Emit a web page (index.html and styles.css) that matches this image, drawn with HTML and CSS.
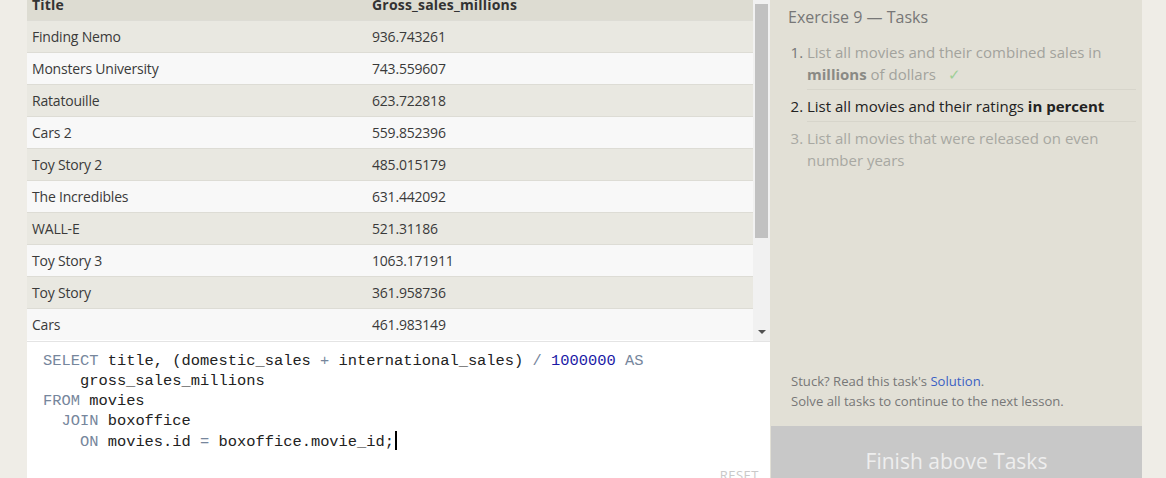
FILE: index.html
```html
<!DOCTYPE html>
<html>
<head>
<meta charset="utf-8">
<link rel="stylesheet" href="styles.css">
</head>
<body>
<div class="page">
  <div class="gutter"></div>
  <main class="left">
    <div class="results">
      <div class="table-scroll">
        <table class="grid">
          <thead>
            <tr><th class="c1">Title</th><th>Gross_sales_millions</th></tr>
          </thead>
          <tbody>
            <tr><td class="c1">Finding Nemo</td><td>936.743261</td></tr>
            <tr><td class="c1">Monsters University</td><td>743.559607</td></tr>
            <tr><td class="c1">Ratatouille</td><td>623.722818</td></tr>
            <tr><td class="c1">Cars 2</td><td>559.852396</td></tr>
            <tr><td class="c1">Toy Story 2</td><td>485.015179</td></tr>
            <tr><td class="c1">The Incredibles</td><td>631.442092</td></tr>
            <tr><td class="c1">WALL-E</td><td>521.31186</td></tr>
            <tr><td class="c1">Toy Story 3</td><td>1063.171911</td></tr>
            <tr><td class="c1">Toy Story</td><td>361.958736</td></tr>
            <tr><td class="c1">Cars</td><td>461.983149</td></tr>
          </tbody>
        </table>
      </div>
      <div class="scrollbar">
        <div class="thumb"></div>
        <div class="arrow"></div>
      </div>
    </div>
    <div class="editor">
      <pre class="code"><span class="kw">SELECT</span> title, (domestic_sales <span class="op">+</span> international_sales) <span class="op">/</span> <span class="num">1000000</span> <span class="kw">AS</span>
    gross_sales_millions
<span class="kw">FROM</span> movies
  <span class="kw">JOIN</span> boxoffice
    <span class="kw">ON</span> movies.id <span class="op">=</span> boxoffice.movie_id;<span class="cursor"></span></pre>
      <div class="reset-row"><span class="reset">RESET</span></div>
    </div>
  </main>
  <aside class="tasks">
    <h2 class="tasks-title">Exercise 9 — Tasks</h2>
    <ol class="task-list">
      <li class="done">List all movies and their combined sales in <b>millions</b> of dollars <span class="check">✓</span></li>
      <li class="active">List all movies and their ratings <b>in percent</b></li>
      <li class="todo">List all movies that were released on even number years</li>
    </ol>
    <div class="spacer"></div>
    <p class="help">Stuck? Read this task's <a class="link">Solution</a>.<br>Solve all tasks to continue to the next lesson.</p>
    <div class="finish">Finish above Tasks</div>
  </aside>
  <div class="right-gutter"></div>
</div>
</body>
</html>
```

FILE: styles.css
```css
html, body {
  margin: 0;
  padding: 0;
  height: 100%;
  overflow: hidden;
}
body {
  background: #efede7;
  font-family: "Open Sans", "Noto Sans", sans-serif;
  color: #333;
}
.page {
  display: flex;
  height: 478px;
  overflow: hidden;
}
.gutter {
  width: 27px;
  flex-shrink: 0;
}
.left {
  width: 743px;
  flex-shrink: 0;
  display: flex;
  flex-direction: column;
  background: #fff;
}
.results {
  height: 341px;
  display: flex;
  flex-shrink: 0;
  border-bottom: 1px solid #e4e4e4;
  overflow: hidden;
}
.table-scroll {
  width: 726px;
  overflow: hidden;
}
.grid {
  width: 100%;
  border-collapse: collapse;
  margin-top: -12px;
  font-size: 14px;
}
.grid th {
  background: #dddcd2;
  text-align: left;
  font-weight: 700;
  height: 32px;
  padding: 0 5px;
  color: #333;
  letter-spacing: 0.2px;
}
.grid td {
  height: 31px;
  padding: 0 5px;
  border-top: 1px solid #dddcd5;
  color: #3a3a3a;
  letter-spacing: -0.2px;
}
.grid th.c1, .grid td.c1 {
  width: 330px;
}
.grid tbody tr:nth-child(odd) td {
  background: #e9e8e1;
}
.grid tbody tr:nth-child(even) td {
  background: #f8f8f8;
}
.scrollbar {
  width: 17px;
  flex-shrink: 0;
  background: #f1f1f1;
  display: flex;
  flex-direction: column;
  align-items: center;
  padding-top: 4px;
  box-sizing: border-box;
}
.thumb {
  width: 13px;
  height: 234px;
  background: #c1c1c1;
}
.arrow {
  margin-top: auto;
  margin-bottom: 7px;
  width: 0;
  height: 0;
  border-left: 4px solid transparent;
  border-right: 4px solid transparent;
  border-top: 4px solid #505050;
}
.editor {
  flex: 1;
  display: flex;
  flex-direction: column;
  padding: 9px 16px 0 16px;
  background: #fff;
}
.code {
  margin: 0;
  font-family: "Liberation Mono", "DejaVu Sans Mono", monospace;
  font-size: 15.4px;
  line-height: 20px;
  color: #222;
}
.kw, .op {
  color: #76869c;
}
.num {
  color: #1a1aa6;
}
.cursor {
  display: inline-block;
  width: 2px;
  height: 19px;
  background: #000;
  vertical-align: -4px;
  margin-left: 1px;
}
.reset-row {
  margin-top: auto;
  display: flex;
  justify-content: flex-end;
  margin-right: -5px;
}
.reset {
  font-size: 13px;
  color: #c9c9c9;
  letter-spacing: 0.5px;
  line-height: 18px;
  margin-bottom: -6px;
}
.tasks {
  width: 372px;
  flex-shrink: 0;
  background: #e2e0d6;
  display: flex;
  flex-direction: column;
  box-sizing: border-box;
  padding: 0;
}
.tasks-title {
  margin: 6px 0 0 18px;
  font-size: 16px;
  font-weight: 400;
  color: #777;
  line-height: 22px;
}
.task-list {
  margin: 13px 0 0 0;
  padding: 0 6px 0 37px;
  font-size: 15px;
  line-height: 22px;
}
.task-list li {
  padding: 0 0 4px 0;
  border-bottom: 1px solid #d7d5cb;
  margin-bottom: 5px;
}
.task-list li:last-child {
  border-bottom: none;
}
.task-list li.done {
  color: #a3a39d;
}
.task-list li.done b {
  color: #8a8a85;
}
.task-list li.done::marker {
  color: #777;
}
.check {
  color: #9fcf97;
  margin-left: 8px;
}
.task-list li.active {
  color: #222;
}
.task-list li.todo {
  color: #a8a8a2;
}
.spacer {
  flex: 1;
}
.help {
  margin: 0 0 15px 21px;
  font-size: 13.1px;
  line-height: 20px;
  color: #777;
}
.link {
  color: #3a5fc4;
}
.finish {
  flex-shrink: 0;
  height: 70px;
  margin: 0 0 -18px 1px;
  background: #c8c8c8;
  color: #eeeeee;
  font-size: 21px;
  display: flex;
  align-items: center;
  justify-content: center;
}
.right-gutter {
  flex: 1;
}
```
